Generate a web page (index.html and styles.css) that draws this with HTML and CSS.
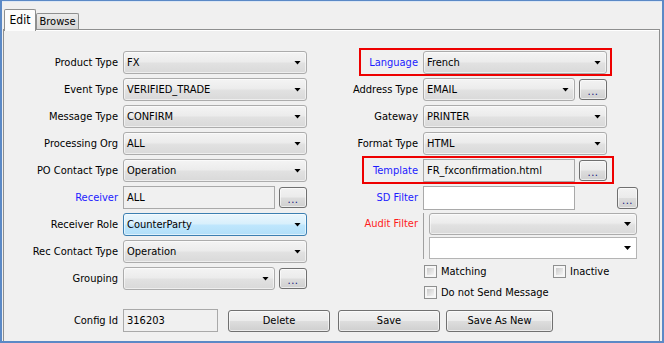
FILE: index.html
```html
<!DOCTYPE html>
<html>
<head>
<meta charset="utf-8">
<link rel="stylesheet" href="styles.css">
</head>
<body>
<div class="window">
  <div class="tabs">
    <div class="tab active">Edit</div>
    <div class="tab">Browse</div>
  </div>
  <div class="panel">
    <div class="form">
      <div class="col col-left">
        <div class="row"><span class="lbl">Product Type</span><div class="combo wide">FX</div></div>
        <div class="row"><span class="lbl">Event Type</span><div class="combo wide">VERIFIED_TRADE</div></div>
        <div class="row"><span class="lbl">Message Type</span><div class="combo wide">CONFIRM</div></div>
        <div class="row"><span class="lbl">Processing Org</span><div class="combo wide">ALL</div></div>
        <div class="row"><span class="lbl">PO Contact Type</span><div class="combo wide">Operation</div></div>
        <div class="row"><span class="lbl blue">Receiver</span><div class="field ro">ALL</div><div class="dots">...</div></div>
        <div class="row"><span class="lbl">Receiver Role</span><div class="combo wide focus">CounterParty</div></div>
        <div class="row"><span class="lbl">Rec Contact Type</span><div class="combo wide">Operation</div></div>
        <div class="row"><span class="lbl">Grouping</span><div class="combo narrow"></div><div class="dots">...</div></div>
      </div>
      <div class="col col-right">
        <div class="row mark mark-lang"><span class="lbl blue">Language</span><div class="combo wide">French</div></div>
        <div class="row"><span class="lbl">Address Type</span><div class="combo narrow">EMAIL</div><div class="dots">...</div></div>
        <div class="row"><span class="lbl">Gateway</span><div class="combo wide">PRINTER</div></div>
        <div class="row"><span class="lbl">Format Type</span><div class="combo wide">HTML</div></div>
        <div class="row mark mark-tpl"><span class="lbl blue">Template</span><div class="field ro">FR_fxconfirmation.html</div><div class="dots">...</div></div>
        <div class="row"><span class="lbl blue">SD Filter</span><div class="field white"></div><div class="dots small">...</div></div>
        <div class="audit-row">
          <span class="lbl red">Audit Filter</span>
          <div class="audit-box">
            <div class="combo audit"></div>
            <div class="combo audit edit"></div>
          </div>
        </div>
        <div class="checks">
          <label class="chk"><span class="box"></span>Matching</label>
          <label class="chk"><span class="box"></span>Inactive</label>
          <label class="chk"><span class="box"></span>Do not Send Message</label>
        </div>
      </div>
    </div>
    <div class="footer">
      <span class="lbl">Config Id</span>
      <div class="field ro cfg">316203</div>
      <div class="btn b-del">Delete</div>
      <div class="btn b-save">Save</div>
      <div class="btn b-new">Save As New</div>
    </div>
  </div>
</div>
</body>
</html>
```
FILE: styles.css
```css
html, body {
  margin: 0;
  padding: 0;
  background: #f0f0f0;
}
body {
  font-family: "DejaVu Sans Condensed", "DejaVu Sans", sans-serif;
  font-stretch: condensed;
  font-size: 11px;
  color: #000;
}
.window {
  box-sizing: border-box;
  width: 664px;
  height: 343px;
  border: 2px solid #5b89c6;
  border-top-width: 1px;
  display: flex;
  flex-direction: column;
  background: #f0f0f0;
}
.tabs {
  height: 28px;
  flex: none;
  display: flex;
  align-items: flex-end;
  padding-left: 2px;
  box-shadow: inset 0 1px #dce7f5;
}
.tab {
  box-sizing: border-box;
  border: 1px solid #8e8f8f;
  border-bottom: none;
  border-radius: 2px 2px 0 0;
  display: flex;
  align-items: center;
  justify-content: center;
}
.tab.active {
  width: 32px;
  height: 22px;
  margin-bottom: -2px;
  background: #fcfcfc;
  position: relative;
  z-index: 1;
  font-size: 12px;
  padding-bottom: 2px;
}
.tab:not(.active) {
  width: 43px;
  height: 16px;
  background: linear-gradient(#ececec, #d6d6d6);
}
.panel {
  flex: 1;
  margin: 0 2px 0 1px;
  border: 1px solid #8e8f8f;
  border-bottom: none;
  box-shadow: inset 0 1px #fff;
  padding: 21px 0 0 6px;
  background: #f0f0f0;
}
.form {
  display: flex;
  gap: 13px;
}
.col {
  display: flex;
  flex-direction: column;
  gap: 4px;
}
.row {
  display: flex;
  align-items: center;
  height: 23px;
}
.lbl {
  flex: none;
  text-align: right;
  margin-right: 5px;
  white-space: nowrap;
}
.col-left .lbl, .footer .lbl { width: 108px; }
.col-right .lbl { width: 98px; }
.blue { color: #1c1cff; }
.red { color: #ff1c1c; }

.combo {
  box-sizing: border-box;
  height: 23px;
  border: 1px solid #acacac;
  border-radius: 3px;
  background: linear-gradient(#f4f4f4, #ececec 45%, #e1e1e1 55%, #d9d9d9);
  box-shadow: inset 0 0 0 1px rgba(255,255,255,0.55);
  display: flex;
  align-items: center;
  padding-left: 3px;
  white-space: nowrap;
}
.combo::after {
  content: "";
  width: 7px;
  height: 4px;
  background: #000;
  clip-path: polygon(0 0, 100% 0, 50% 100%);
  margin-left: auto;
  margin-right: 5px;
}
.combo.wide { width: 184px; }
.combo.narrow { width: 152px; }
.combo.focus {
  border-color: #3c7fb1;
  background: linear-gradient(#eaf6fd, #d9f0fc 45%, #bee6fd 55%, #b2dff8);
}
.field {
  box-sizing: border-box;
  width: 152px;
  height: 23px;
  border: 1px solid #a9a9a9;
  display: flex;
  align-items: center;
  padding-left: 3px;
  white-space: nowrap;
}
.field.ro { background: #f0f0f0; }
.field.white { background: #fff; height: 24px; }
.dots {
  box-sizing: border-box;
  width: 28px;
  height: 21px;
  margin-left: 4px;
  border: 1px solid #707070;
  border-radius: 3px;
  background: linear-gradient(#f2f2f2, #ebebeb 48%, #dddddd 52%, #cfcfcf);
  box-shadow: inset 0 0 0 1px rgba(255,255,255,0.6);
  display: flex;
  align-items: flex-end;
  justify-content: center;
  line-height: 14px;
  letter-spacing: 0.5px;
  color: #101080;
}
.dots.small {
  width: 21px;
  height: 22px;
  margin-left: 42px;
}
.audit-row {
  display: flex;
  align-items: flex-start;
}
.audit-row .lbl { line-height: 22px; }
.audit-box {
  border-left: 1px solid #a0a0a0;
  padding-left: 5px;
  display: flex;
  flex-direction: column;
  gap: 2px;
}
.combo.audit {
  width: 208px;
  height: 22px;
}
.combo.audit.edit {
  background: #fff;
  box-shadow: none;
  border-radius: 0;
  border-color: #b4b4b4;
}
.checks {
  display: grid;
  grid-template-columns: 129px auto;
  row-gap: 8px;
  margin-top: 2px;
  padding-left: 104px;
}
.chk {
  display: flex;
  align-items: center;
  height: 13px;
  white-space: nowrap;
}
.box {
  box-sizing: border-box;
  width: 13px;
  height: 13px;
  border: 1px solid #8e8f8f;
  padding: 2px;
  background: linear-gradient(135deg, #cbcbcb, #f4f4f4) content-box, #f6f6f6;
  margin-right: 4px;
}
.footer {
  display: flex;
  align-items: center;
  margin-top: 10px;
}
.field.cfg { width: 95px; }
.btn {
  box-sizing: border-box;
  height: 22px;
  border: 1px solid #707070;
  border-radius: 3px;
  background: linear-gradient(#f2f2f2, #ebebeb 48%, #dddddd 52%, #cfcfcf);
  box-shadow: inset 0 0 0 1px rgba(255,255,255,0.6);
  display: flex;
  align-items: center;
  justify-content: center;
}
.b-del { width: 102px; margin-left: 10px; }
.b-save { width: 102px; margin-left: 8px; }
.b-new { width: 107px; margin-left: 6px; }

.mark { position: relative; }
.mark::before {
  content: "";
  position: absolute;
  top: -3px;
  height: 28px;
  border: 2px solid #ee0000;
  box-sizing: border-box;
  pointer-events: none;
}
.mark-lang::before { left: 39px; width: 253px; }
.mark-tpl::before { left: 42px; width: 252px; }
```
